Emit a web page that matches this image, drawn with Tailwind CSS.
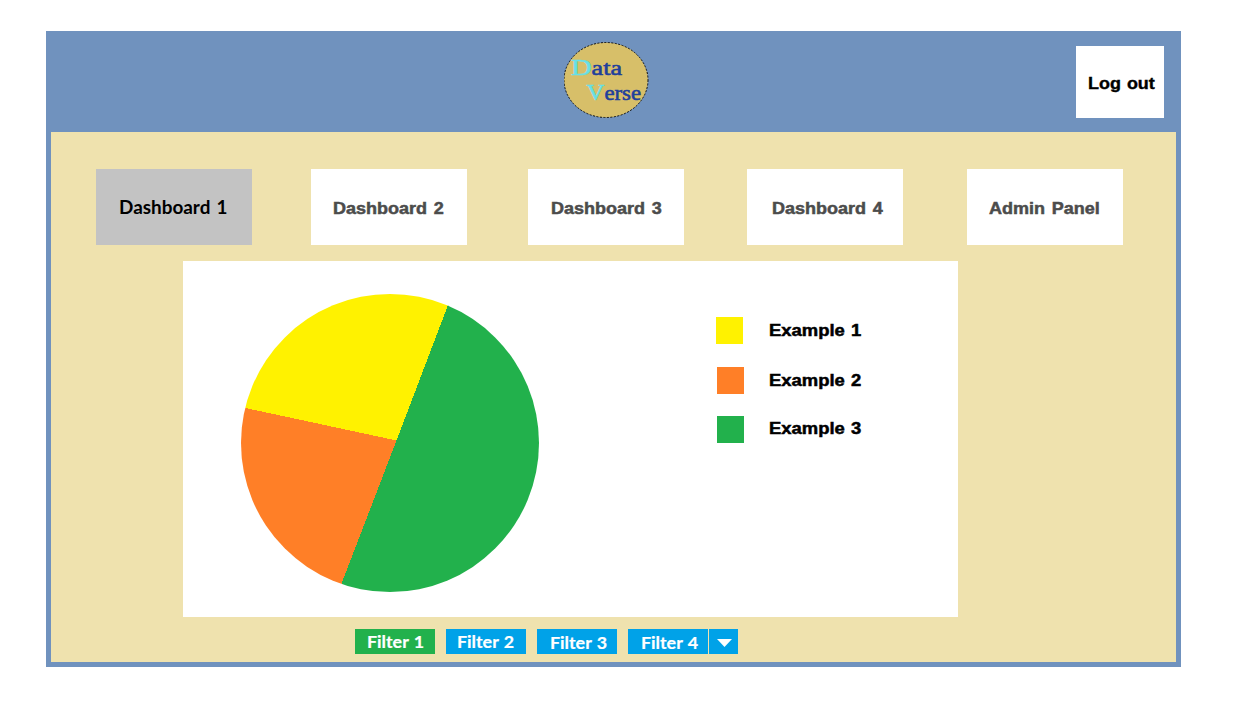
<!DOCTYPE html>
<html lang="en">
<head>
<meta charset="utf-8">
<title>Data Verse</title>
<script src="https://cdn.jsdelivr.net/npm/@tailwindcss/browser@4"></script>
</head>
<body class="h-[721px] overflow-hidden bg-white pt-[31px] pl-[46px] font-['Liberation_Sans',sans-serif]">
<div class="flex h-[636px] w-[1135px] flex-col bg-[#7092be] px-[5px] pb-[5px]">
  <header class="flex h-[101px] shrink-0 justify-between pt-[11px] pr-[12px] pl-[513px]">
    <svg class="h-[77px] w-[85px]" viewBox="0 0 85 77" aria-label="Data Verse">
      <ellipse cx="42" cy="38" rx="42" ry="37.500" fill="#d7bf69" stroke="#111" stroke-width="1" stroke-dasharray="2 1.5"/>
      <g font-family="'Liberation Serif', serif" font-size="22" fill="#1f409c" stroke="#1f409c" stroke-width="0.6">
        <text x="7" y="33" textLength="51" lengthAdjust="spacingAndGlyphs"><tspan font-size="24" fill="#68e0e6" stroke="#68e0e6">D</tspan>ata</text>
        <text x="22.500" y="58" textLength="54.500" lengthAdjust="spacingAndGlyphs"><tspan font-size="24" fill="#68e0e6" stroke="#68e0e6">V</tspan>erse</text>
      </g>
    </svg>
    <button class="mt-[4px] flex h-[72px] w-[88px] items-center bg-white pt-[3px] pl-[12px] text-[17px] font-bold whitespace-nowrap text-black [-webkit-text-stroke:0.4px_black] [word-spacing:1px]"><span class="origin-left scale-x-[1.055]">Log out</span></button>
  </header>
  <main class="flex flex-1 flex-col bg-[#efe2ae] pt-[37px]">
    <nav class="flex h-[76px] pl-[45px] text-[17px] font-bold whitespace-nowrap text-[#4c4c4c] [-webkit-text-stroke:0.5px_#4c4c4c]">
      <button class="flex w-[156px] items-center bg-[#c3c3c3] pt-[1px] pl-[23px] font-['Lato',sans-serif] text-[18px] text-black [-webkit-text-stroke:0px] [word-spacing:1.5px]"><span class="origin-left scale-x-[1.05]">Dashboard 1</span></button>
      <button class="ml-[59px] flex w-[156px] items-center bg-white pt-[3px] pl-[22px] [word-spacing:1.5px]"><span class="origin-left scale-x-[1.06]">Dashboard 2</span></button>
      <button class="ml-[61px] flex w-[156px] items-center bg-white pt-[3px] pl-[23px] [word-spacing:1.5px]"><span class="origin-left scale-x-[1.06]">Dashboard 3</span></button>
      <button class="ml-[63px] flex w-[156px] items-center bg-white pt-[3px] pl-[25px] [word-spacing:1.5px]"><span class="origin-left scale-x-[1.06]">Dashboard 4</span></button>
      <button class="ml-[64px] flex w-[156px] items-center bg-white pt-[3px] pl-[22px] [word-spacing:1.5px]"><span class="origin-left scale-x-[1.06]">Admin Panel</span></button>
    </nav>
    <section class="mt-[16px] ml-[132px] flex h-[356px] w-[775px] bg-white pt-[32px] pl-[57px]">
      <svg class="h-[300px] w-[300px]" viewBox="240 293 300 300" shape-rendering="crispEdges">
        <clipPath id="pie"><circle cx="390" cy="443" r="149"/></clipPath>
        <path d="M396.500 440.500L453 292H542V594H337.500Z" fill="#22b14c" clip-path="url(#pie)"/>
        <path d="M396.500 440.500L453 292H238V406.400Z" fill="#fff200" clip-path="url(#pie)"/>
        <path d="M396.500 440.500L238 406.400V594H337.500Z" fill="#ff7f27" clip-path="url(#pie)"/>
      </svg>
      <ul class="ml-[176px] pt-[24px] text-[17px] leading-[27px] font-bold whitespace-nowrap text-black [-webkit-text-stroke:0.5px_black] [word-spacing:1px]">
        <li class="flex h-[27px]"><span class="size-[27px] bg-[#fff200]"></span><span class="ml-[26px] origin-left scale-x-[1.085]">Example 1</span></li>
        <li class="mt-[23px] ml-px flex h-[27px]"><span class="size-[27px] bg-[#ff7f27]"></span><span class="ml-[25px] origin-left scale-x-[1.085]">Example 2</span></li>
        <li class="mt-[22px] ml-px flex h-[27px]"><span class="size-[27px] bg-[#22b14c]"></span><span class="-mt-px ml-[25px] origin-left scale-x-[1.085]">Example 3</span></li>
      </ul>
    </section>
    <div class="mt-[12px] ml-[304px] flex h-[25px] font-['Lato',sans-serif] text-[17px] leading-[25px] font-bold whitespace-nowrap text-white [-webkit-text-stroke:0.2px_white]">
      <button class="flex w-[80px] bg-[#22b14c] pl-[11.500px] [word-spacing:1px]"><span class="origin-left scale-x-[1.05]">Filter 1</span></button>
      <button class="ml-[11px] flex w-[80px] bg-[#00a2e8] pl-[10.500px] [word-spacing:1px]"><span class="origin-left scale-x-[1.05]">Filter 2</span></button>
      <button class="ml-[11px] flex w-[80px] bg-[#00a2e8] pt-px pl-[12.500px] [word-spacing:1px]"><span class="origin-left scale-x-[1.05]">Filter 3</span></button>
      <button class="ml-[11px] flex w-[80px] bg-[#00a2e8] pt-px pl-[12.500px] [word-spacing:1px]"><span class="origin-left scale-x-[1.05]">Filter 4</span></button>
      <button class="ml-px flex w-[29px] bg-[#00a2e8] pt-[10px] pl-[8px]" aria-label="More filters">
        <svg class="h-[8px] w-[15px]" viewBox="0 0 15 8" fill="white"><path d="M0 0H15L7.500 8Z"/></svg>
      </button>
    </div>
  </main>
</div>
</body>
</html>
